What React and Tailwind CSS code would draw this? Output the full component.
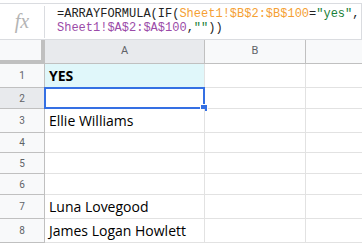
import React from "react";

const rows = [
  { n: 1, h: "h-[24px]", text: "YES", bold: true, bg: "bg-[#e0f7fa]" },
  { n: 2, h: "h-[21px]", text: "", selected: true },
  { n: 3, h: "h-[24px]", text: "Ellie Williams" },
  { n: 4, h: "h-[20px]", text: "" },
  { n: 5, h: "h-[21px]", text: "" },
  { n: 6, h: "h-[21px]", text: "" },
  { n: 7, h: "h-[24px]", text: "Luna Lovegood" },
  { n: 8, h: "h-[24px]", text: "James Logan Howlett" },
];

const mono = { fontFamily: "'Liberation Mono', 'DejaVu Sans Mono', monospace" };

const FormulaBar = () => (
  <div className="pt-[3px] bg-white">
    <div className="flex h-[37px] border-t border-b border-r border-[#dadce0]">
      <div className="w-[46px] shrink-0 flex items-center py-[1px]">
        <div className="w-[45px] h-[32px] border-r border-[#dadce0] flex items-center justify-center">
          <span className="text-[20px] italic text-[#b4b4b4] leading-none -mt-[2px]" style={{ fontFamily: "'Liberation Serif', serif" }}>fx</span>
        </div>
      </div>
      <div className="pl-[11px] pt-[3px] text-[12px] leading-[14px] text-[#222]" style={mono}>
        <div className="whitespace-pre">
          =ARRAYFORMULA(IF(<span className="text-[#f5a033]">Sheet1!$B$2:$B$100</span>=<span className="text-[#188038]">"yes"</span>,
        </div>
        <div className="whitespace-pre">
          <span className="text-[#9b4ba8]">Sheet1!$A$2:$A$100</span>,<span className="text-[#188038]">""</span>))
        </div>
      </div>
    </div>
  </div>
);

const HeaderRow = () => (
  <div className="flex h-[24px] text-[11px] text-[#5f6368]" style={{ fontFamily: "Roboto, 'Liberation Sans', sans-serif" }}>
    <div className="w-[45px] shrink-0 bg-[#f8f9fa] border-r-4 border-b-4 border-[#c0c0c0]" />
    <div className="w-[160px] shrink-0 bg-[#e8eaed] border-r border-b border-[#c0c0c0] flex items-center justify-center">A</div>
    <div className="w-[101px] shrink-0 bg-[#f8f9fa] border-r border-b border-[#c0c0c0] flex items-center justify-center">B</div>
    <div className="flex-1 bg-[#f8f9fa] border-b border-[#c0c0c0]" />
  </div>
);

const Row = ({ r }) => (
  <div className={`flex ${r.h}`}>
    <div
      className={`w-[45px] shrink-0 border-r border-b border-[#c0c0c0] flex items-center justify-center text-[10px] text-[#5f6368] ${r.selected ? "bg-[#e8eaed]" : "bg-[#f8f9fa]"}`}
      style={{ fontFamily: "Roboto, 'Liberation Sans', sans-serif" }}
    >
      {r.n}
    </div>
    <div className={`relative w-[160px] shrink-0 border-r border-b border-[#e2e2e2] flex items-center pl-[4px] ${r.bg || "bg-white"}`}>
      <span className={`text-[14px] text-black whitespace-nowrap ${r.bold ? "font-bold" : ""}`} style={{ fontFamily: "'Open Sans', sans-serif" }}>
        {r.text}
      </span>
      {r.selected && (
        <>
          <div className="absolute -left-[1px] -top-[1px] -right-[1px] -bottom-[1px] border-2 border-[#3570e3]" />
          <div className="absolute -right-[4px] -bottom-[4px] w-[6px] h-[6px] bg-[#3570e3] border border-white box-content" />
        </>
      )}
    </div>
    <div className="w-[101px] shrink-0 border-r border-b border-[#e2e2e2]" />
    <div className="flex-1 border-b border-[#e2e2e2]" />
  </div>
);

export default function App() {
  return (
    <div className="w-[362px] h-[245px] overflow-hidden bg-white">
      <FormulaBar />
      <HeaderRow />
      {rows.map(r => <Row key={r.n} r={r} />)}
    </div>
  );
}
